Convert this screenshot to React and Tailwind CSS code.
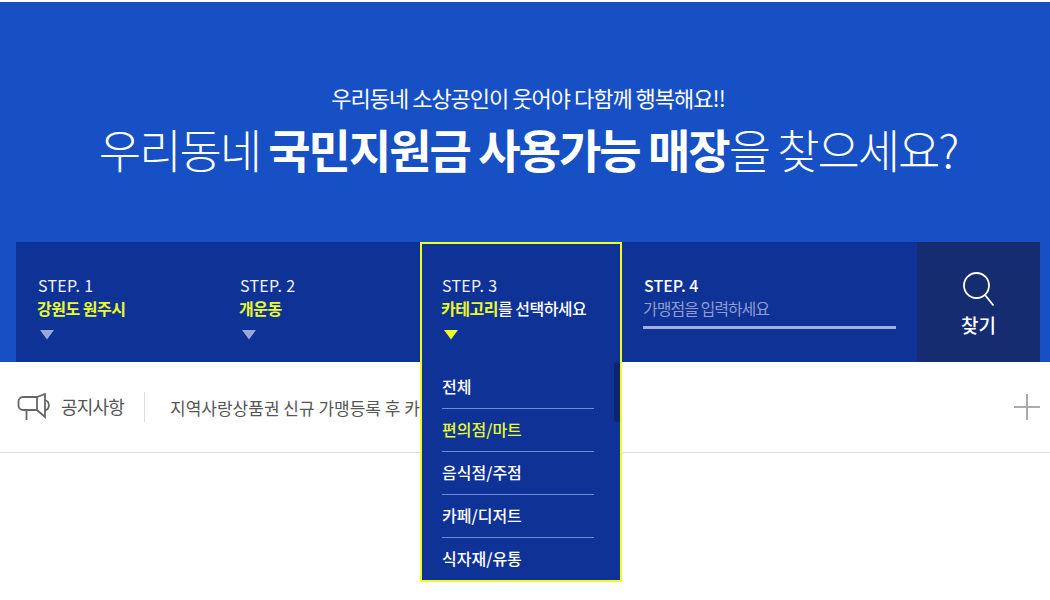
const categories = [
  { name: "전체" },
  { name: "편의점/마트", active: true },
  { name: "음식점/주점" },
  { name: "카페/디저트" },
  { name: "식자재/유통" },
];

const StepArrow = ({ color }) => (
  <svg width="14" height="10" viewBox="0 0 14 10" className="mt-[10px] ml-[2px] block">
    <path d="M0 0H14L7 9.5Z" fill={color} />
  </svg>
);

const Step = ({ label, value }) => (
  <div className="w-[202px] shrink-0 pl-[22px] pt-[32px]">
    <p className="text-[16px] leading-[22px] tracking-[0.3px] text-[#f2f4fb]">{label}</p>
    <p className="text-[16px] leading-[24px] font-bold tracking-[-0.5px] text-[#e9fb2b] -ml-[1px]">{value}</p>
    <StepArrow color="#9aa8d8" />
  </div>
);

const App = () => {
  return (
    <div className="w-[1050px] h-[600px] overflow-hidden bg-white font-['Noto_Sans_CJK_KR','Noto_Sans',sans-serif]">
      <div className="h-[2px] bg-white" />
      <div className="h-[360px] bg-[#1650c4] pl-[16px] pr-[10px] flex flex-col">
        <div className="h-[240px] pt-[79px] text-center text-white">
          <p className="text-[22px] leading-[32px] tracking-[-1px]">우리동네 소상공인이 웃어야 다함께 행복해요!!</p>
          <h1 className="mt-[1px] text-[46px] leading-[68px] font-light tracking-[-2px]">
            우리동네 <strong className="font-bold">국민지원금 사용가능 매장</strong>을 찾으세요?
          </h1>
        </div>
        <div className="relative h-[120px] bg-[#0f3296] flex">
          <Step label="STEP. 1" value="강원도 원주시" />
          <Step label="STEP. 2" value="개운동" />
          <div className="w-[202px] shrink-0" />
          <div className="w-[295px] shrink-0 pl-[21px] pt-[32px]">
            <p className="text-[16px] leading-[22px] font-medium text-white ml-[1px]">STEP. 4</p>
            <input
              placeholder="가맹점을 입력하세요"
              className="w-[253px] h-[33px] pb-[6px] border-b-[3px] border-[#a3aedb] bg-transparent text-[16px] tracking-[-1px] outline-none placeholder:text-[#8f9dd0]"
            />
          </div>
          <button className="w-[123px] shrink-0 bg-[#162c70] flex flex-col items-center pt-[30px] text-white">
            <svg width="32" height="35" viewBox="0 0 32 35" fill="none" stroke="white" strokeWidth="1.8" className="-ml-[2px]">
              <circle cx="14.500" cy="13.500" r="12.500" />
              <path d="M23 23L31.500 33.500" />
            </svg>
            <span className="mt-[4px] text-[19px] leading-[28px] font-medium">찾기</span>
          </button>

          <div className="absolute left-[404px] top-0 z-10 w-[202px] h-[340px] border-2 border-[#eeff22] bg-[#0f3296]">
            <div className="pl-[20px] pt-[30px]">
              <p className="text-[16px] leading-[22px] tracking-[0.3px] text-[#f2f4fb]">STEP. 3</p>
              <p className="text-[16px] leading-[24px] font-medium tracking-[-0.5px] text-white -ml-[1px]">
                <span className="font-bold text-[#e9fb2b]">카테고리</span>를 선택하세요
              </p>
              <StepArrow color="#eeff22" />
            </div>
            <div className="mt-[26px] ml-[20px] w-[152px]">
              {categories.map((item, i) => (
                <div
                  key={item.name}
                  className={`h-[43px] pb-[2px] flex items-center border-b text-[16px] font-medium ${i < 4 ? "border-[#6f8bdc]" : "border-transparent"} ${item.active ? "text-[#e9fb2b]" : "text-white"}`}
                >
                  {item.name}
                </div>
              ))}
            </div>
            <div className="absolute right-0 top-[118px] w-[6px] h-[60px] rounded-[3px] bg-[#0d2470]" />
          </div>
        </div>
      </div>

      <div className="h-[91px] border-b border-[#dcdcdc] pl-[17px] pr-[10px] flex items-center">
        <svg width="34" height="28" viewBox="0 0 34 28" fill="none" stroke="#666" strokeWidth="1.8" className="shrink-0">
          <path d="M20 4H6A4.500 4.500 0 0 0 1.500 8.500V12.500A4.500 4.500 0 0 0 6 17H20Z" />
          <path d="M20 4L28 1V24L20 17" />
          <path d="M28 7a5.500 5.500 0 0 1 0 10.500" />
          <path d="M9.500 17V27" />
        </svg>
        <span className="ml-[10px] mb-[2px] text-[18px] text-[#555] tracking-[-0.8px] shrink-0">공지사항</span>
        <div className="ml-[20px] w-px h-[30px] bg-[#dcdcdc] shrink-0" />
        <span className="ml-[25px] mt-[2px] w-[250px] overflow-hidden whitespace-nowrap text-[17px] text-[#555]">
          지역사랑상품권 신규 가맹등록 후 카
        </span>
        <svg width="26" height="26" viewBox="0 0 26 26" stroke="#aaa" strokeWidth="2" className="ml-auto shrink-0">
          <path d="M13 0V26M0 13H26" />
        </svg>
      </div>
    </div>
  );
};

export default App;
